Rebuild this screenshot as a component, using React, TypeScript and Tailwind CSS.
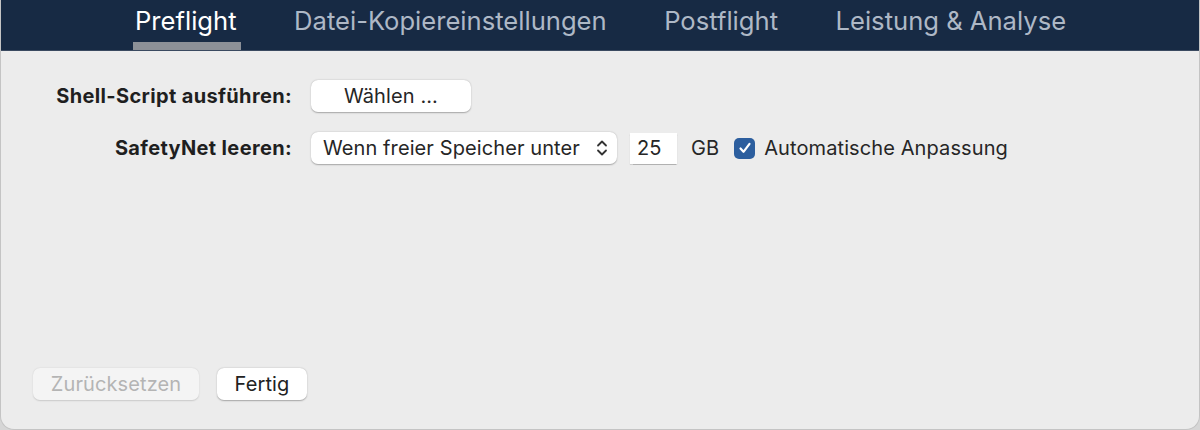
import React from "react";

const tabs = ["Preflight", "Datei-Kopiereinstellungen", "Postflight", "Leistung & Analyse"];

const font = { fontFamily: '"Inter", "Liberation Sans", sans-serif' };

const App = () => {
  return (
    <div className="w-[1200px] h-[430px] bg-[#d6d6d6] overflow-hidden" style={font}>
      <div className="h-[430px] flex flex-col bg-[#ececec] rounded-b-[14px] border border-t-0 border-[#c4c4c4]">
        {/* tab bar */}
        <div className="h-[51px] shrink-0 bg-[#172a44] border-b border-[#3a4a60] flex pl-[132px] gap-[53.5px]">
          {tabs.map((t, i) => (
            <div key={t} className="relative h-full flex items-start pt-[4px]">
              <span
                className={`text-[25.6px] leading-[34px] px-[2px] ${
                  i === 0 ? "text-white" : "text-[#aeb8c6]"
                }`}
              >
                {t}
              </span>
              {i === 0 && (
                <div className="absolute left-0 right-[-2px] bottom-0 h-[8px] bg-[#8c9097]" />
              )}
            </div>
          ))}
        </div>

        {/* settings */}
        <div className="flex-1 flex flex-col pt-[29px] gap-[20px] text-[20px] tracking-[0.1px] text-[#262626]">
          <div className="flex items-center h-[32px]">
            <div className="w-[291px] text-right font-bold text-[20px] tracking-[0.35px] text-[#1f1f1f]">Shell-Script ausführen:</div>
            <button className="ml-[19px] w-[160px] h-[32px] bg-white rounded-[7px] shadow-[0_0.5px_1.5px_rgba(0,0,0,0.3)] text-center">
              Wählen ...
            </button>
          </div>
          <div className="flex items-center h-[32px]">
            <div className="w-[291px] text-right font-bold text-[20px] tracking-[0.35px] text-[#1f1f1f]">SafetyNet leeren:</div>
            <div className="ml-[19px] w-[306px] h-[32px] bg-white rounded-[7px] shadow-[0_0.5px_1.5px_rgba(0,0,0,0.3)] flex items-center pl-[12px] pr-[9px]">
              <span className="flex-1 whitespace-nowrap">Wenn freier Speicher unter</span>
              <svg width="12" height="18" viewBox="0 0 12 18" fill="none" stroke="#333" strokeWidth="1.8" strokeLinecap="round" strokeLinejoin="round">
                <path d="M2 6.5 L6 2.5 L10 6.5" />
                <path d="M2 11.5 L6 15.5 L10 11.5" />
              </svg>
            </div>
            <div className="ml-[13px] w-[47px] h-[31px] bg-white shadow-[0_0.5px_1px_rgba(0,0,0,0.25)] flex items-center pl-[7px]">
              25
            </div>
            <span className="ml-[14px]">GB</span>
            <div className="ml-[15px] w-[21px] h-[21px] rounded-[5px] bg-[#2c5e9e] flex items-center justify-center">
              <svg width="14" height="14" viewBox="0 0 14 14" fill="none" stroke="white" strokeWidth="2.2" strokeLinecap="round" strokeLinejoin="round">
                <path d="M2.5 7.5 L5.5 10.8 L11.5 2.8" />
              </svg>
            </div>
            <span className="ml-[9px]">Automatische Anpassung</span>
          </div>
        </div>

        {/* footer */}
        <div className="flex items-center gap-[18px] pl-[32px] pb-[29px] text-[20px] tracking-[0.1px]">
          <button className="w-[166px] h-[32px] bg-[#f4f4f4] rounded-[7px] shadow-[0_0.5px_1.5px_rgba(0,0,0,0.15)] text-[#b4b4b4]">
            Zurücksetzen
          </button>
          <button className="w-[90px] h-[32px] bg-white rounded-[7px] shadow-[0_0.5px_1.5px_rgba(0,0,0,0.3)] text-[#222]">
            Fertig
          </button>
        </div>
      </div>
    </div>
  );
};

export default App;
